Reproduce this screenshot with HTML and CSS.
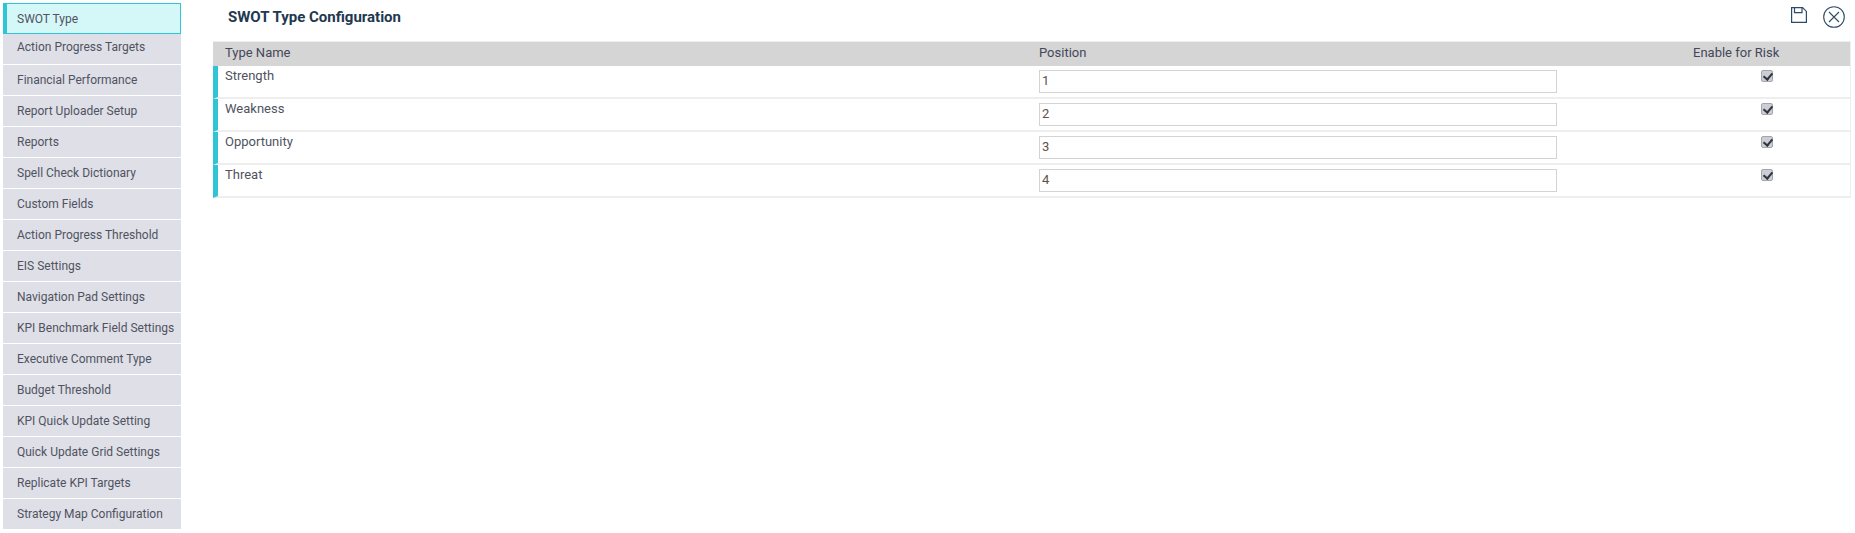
FILE: index.html
```html
<!DOCTYPE html>
<html lang="en">
<head>
<meta charset="utf-8">
<title>SWOT Type Configuration</title>
<link rel="stylesheet" href="styles.css">
</head>
<body>
<div class="app">
  <nav class="side">
    <a class="item active">SWOT Type</a>
    <a class="item first">Action Progress Targets</a>
    <a class="item">Financial Performance</a>
    <a class="item">Report Uploader Setup</a>
    <a class="item">Reports</a>
    <a class="item">Spell Check Dictionary</a>
    <a class="item">Custom Fields</a>
    <a class="item">Action Progress Threshold</a>
    <a class="item">EIS Settings</a>
    <a class="item">Navigation Pad Settings</a>
    <a class="item">KPI Benchmark Field Settings</a>
    <a class="item">Executive Comment Type</a>
    <a class="item">Budget Threshold</a>
    <a class="item">KPI Quick Update Setting</a>
    <a class="item">Quick Update Grid Settings</a>
    <a class="item">Replicate KPI Targets</a>
    <a class="item">Strategy Map Configuration</a>
  </nav>
  <main class="main">
    <header class="top">
      <h1 class="title">SWOT Type Configuration</h1>
      <div class="tools">
        <svg class="save" width="16" height="16" viewBox="0 0 16 16" fill="none" stroke="#2f4a68" stroke-width="1.2"><path d="M.6.6h11l3.8 3.8v11H.6z"/><path d="M3.5.6v5h7.5V.6"/></svg>
        <svg class="close" width="22" height="22" viewBox="0 0 22 22" fill="none" stroke="#2f4a68" stroke-width="1.1"><circle cx="11" cy="11" r="10.3"/><path d="M6 6l10 10M16 6L6 16"/></svg>
      </div>
    </header>
    <section class="grid">
      <div class="row head">
        <div class="c1">Type Name</div>
        <div class="c2">Position</div>
        <div class="c3">Enable for Risk</div>
      </div>
      <div class="row body">
        <div class="c1">Strength</div>
        <div class="c2"><input class="num" type="text" value="1"></div>
        <div class="c3 chk"><input type="checkbox" checked></div>
      </div>
      <div class="row body">
        <div class="c1">Weakness</div>
        <div class="c2"><input class="num" type="text" value="2"></div>
        <div class="c3 chk"><input type="checkbox" checked></div>
      </div>
      <div class="row body">
        <div class="c1">Opportunity</div>
        <div class="c2"><input class="num" type="text" value="3"></div>
        <div class="c3 chk"><input type="checkbox" checked></div>
      </div>
      <div class="row body">
        <div class="c1">Threat</div>
        <div class="c2"><input class="num" type="text" value="4"></div>
        <div class="c3 chk"><input type="checkbox" checked></div>
      </div>
    </section>
  </main>
</div>
</body>
</html>
```
FILE: styles.css
```css
* { box-sizing: border-box; }
html, body { margin: 0; height: 100%; background: #fff; overflow: hidden; }
body { font-family: Roboto, "Liberation Sans", sans-serif; font-size: 13px; color: #50535f; }
.app { display: flex; align-items: flex-start; padding: 3px 4px 0 3px; }
.side { width: 178px; flex: none; display: flex; flex-direction: column; font-size: 12px; }
.item { display: flex; align-items: center; height: 30px; margin-bottom: 1px; padding-left: 14px; background: #dedfe7; white-space: nowrap; }
.item.active { height: 31px; margin-bottom: 0; padding-left: 10px; background: #d4f7f8; border: 1px solid #2fc5d6; border-left-width: 4px; }
.item.first { align-items: flex-start; padding-top: 6px; }
.main { flex: 1; padding-left: 32px; }
.top { display: flex; justify-content: space-between; height: 38px; padding-left: 15px; }
.title { margin: 6px 0 0; font-size: 15px; line-height: 17px; font-weight: 700; color: #22384f; }
.tools { display: flex; align-items: flex-start; gap: 16px; padding-right: 6px; }
.save { margin-top: 4px; }
.close { margin-top: 3px; }
.grid { border-top: 1px solid #eee; border-right: 1px solid #eee; }
.row { display: grid; }
.head { height: 24px; padding-bottom: 3px; grid-template-columns: 826px 1fr 157px; align-items: center; background: #d5d5d5; color: #44475a; }
.head .c1 { padding-left: 12px; }
.body { height: 33px; grid-template-columns: 821px 1fr 157px; border-left: 5px solid #2fc5d6; border-bottom: 2px solid #eee; }
.body .c1 { padding: 2px 0 0 7px; line-height: 15px; }
.c2 { min-width: 0; }
.num { display: block; width: 518px; height: 23px; margin-top: 4px; padding: 0 2px 2px; border: 1px solid #d3d3d3; background: #fff; font: 13px Roboto, sans-serif; color: #5e5048; outline: none; }
.chk { padding-left: 68px; }
.chk input { appearance: none; position: relative; display: block; width: 12px; height: 12px; margin: 4px 0 0; background: #ccced5; border: 1px solid #a2a6ae; border-radius: 2px; }
.chk input::after { content: ""; position: absolute; left: 3px; top: 0; width: 4px; height: 7px; border: solid #33343c; border-width: 0 2px 2px 0; transform: rotate(40deg); }
```
